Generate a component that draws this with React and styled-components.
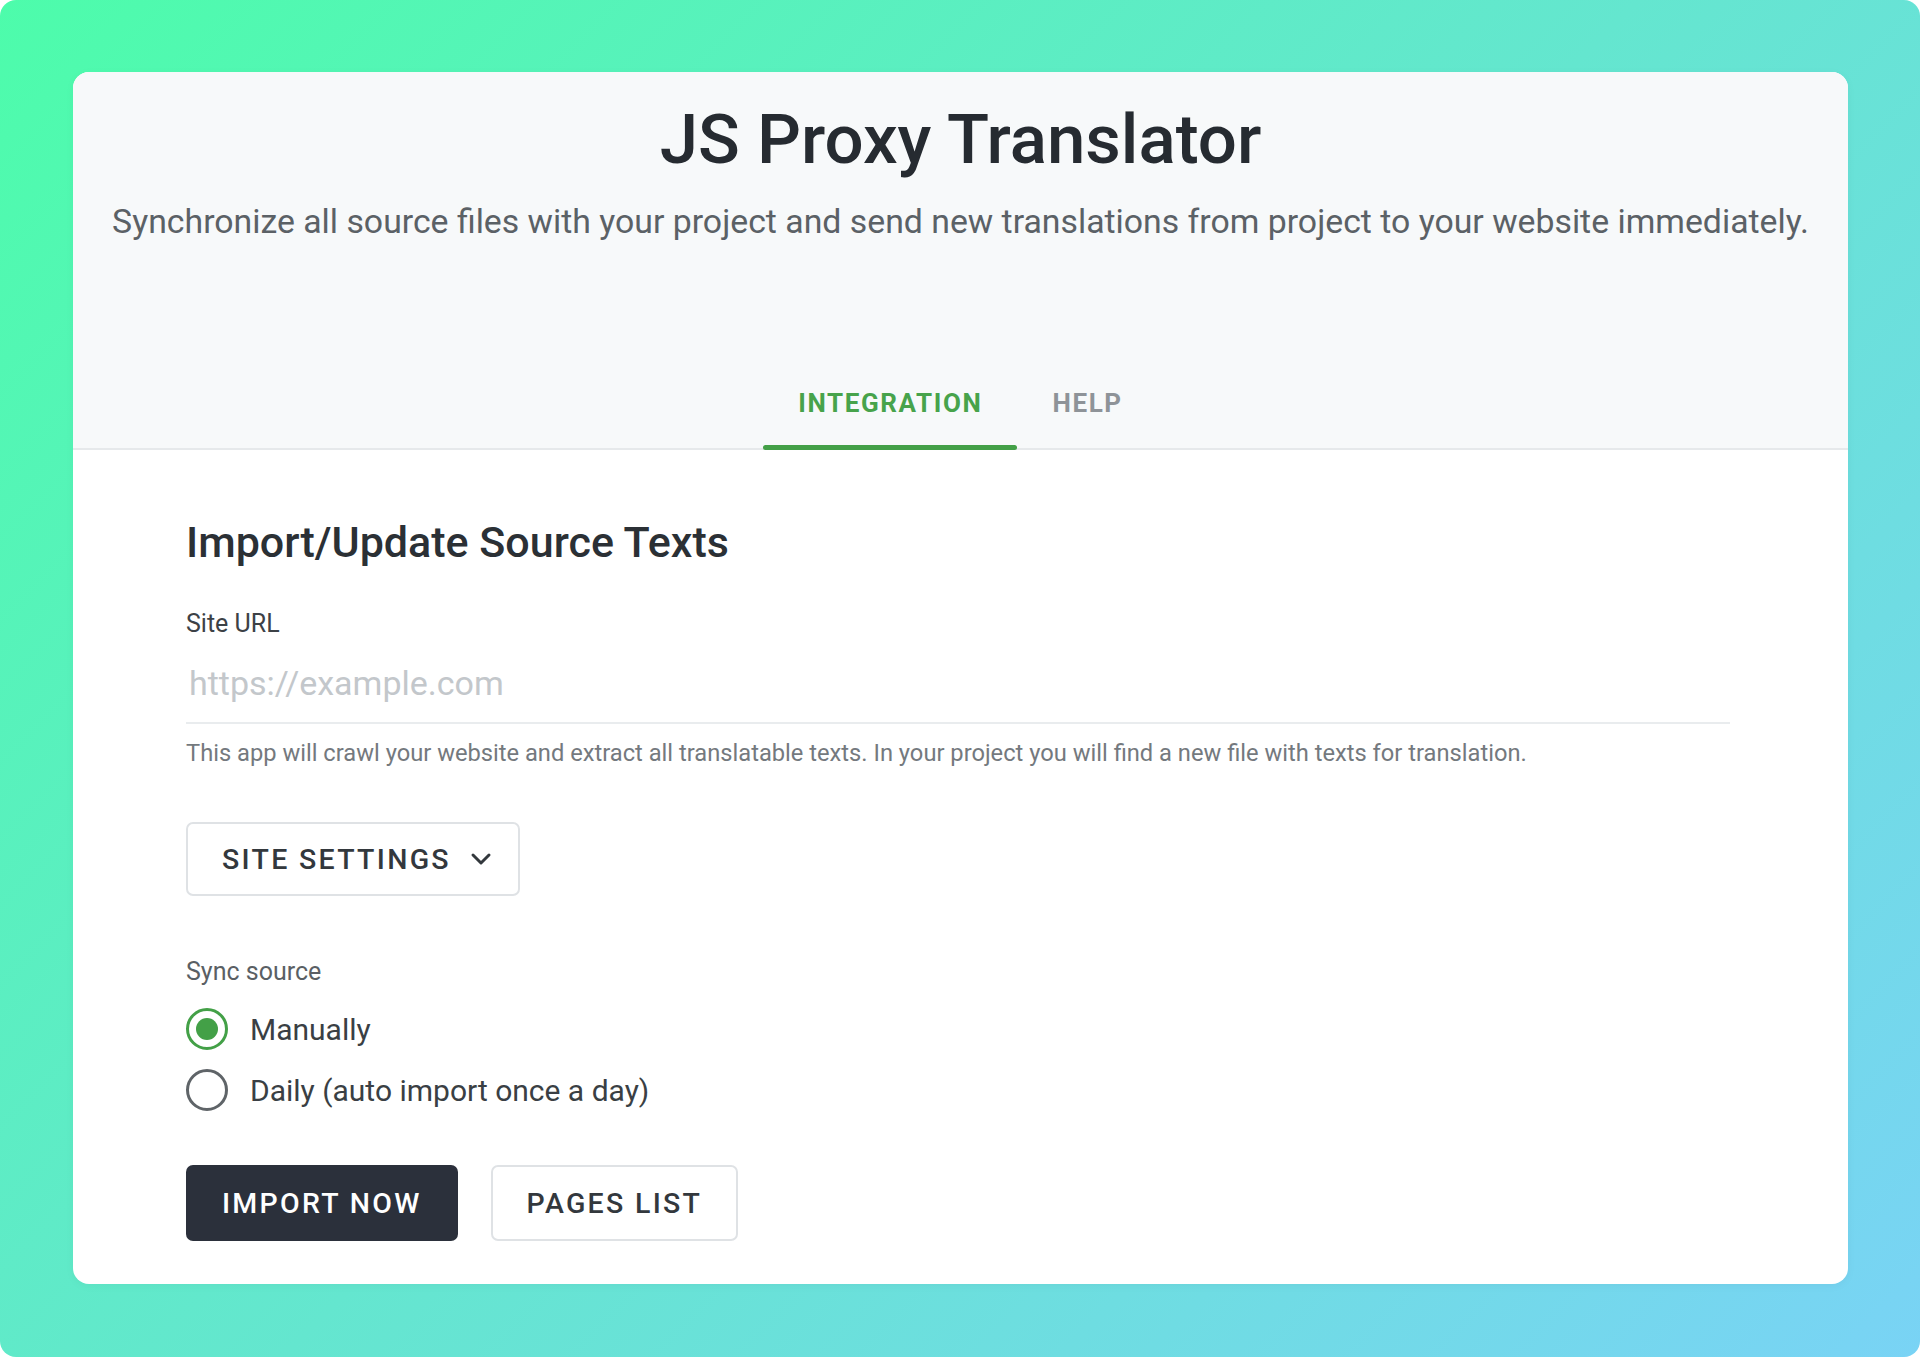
import React, { useState } from "react";
import styled, { createGlobalStyle } from "styled-components";

const GlobalStyle = createGlobalStyle`
  html, body { margin: 0; padding: 0; background: #ffffff; }
  body { font-family: Roboto, "Noto Sans", "Liberation Sans", sans-serif; -webkit-font-smoothing: antialiased; }
  * { box-sizing: border-box; }
`;

const Page = styled.div`
  width: 1920px;
  height: 1357px;
  border-radius: 16px;
  background: linear-gradient(135deg, #4dfcab 0%, #64e6cf 50%, #79d3f5 100%);
  padding: 72px 72px 0 73px;
`;

const Card = styled.div`
  background: #ffffff;
  border-radius: 16px;
  overflow: hidden;
  box-shadow: 0 2px 10px rgba(0, 0, 0, 0.04);
`;

const Header = styled.header`
  background: #f7f9fa;
  border-bottom: 2px solid #e6e9eb;
  display: flex;
  flex-direction: column;
  align-items: center;
  padding-top: 28px;
`;

const Title = styled.h1`
  margin: 0;
  font-size: 69px;
  line-height: 80px;
  font-weight: 500;
  color: #262b31;
`;

const Subtitle = styled.p`
  margin: 22px 0 0;
  font-size: 33.8px;
  line-height: 40px;
  font-weight: 400;
  color: #5b6166;
  white-space: nowrap;
`;

const Tabs = styled.nav`
  display: flex;
  margin-top: 116px;
`;

const Tab = styled.button`
  position: relative;
  height: 90px;
  padding: 0 35px;
  border: none;
  background: transparent;
  font-family: inherit;
  font-size: 26px;
  font-weight: 700;
  letter-spacing: 1.6px;
  color: ${(p) => (p.$active ? "#47a34b" : "#8e9398")};
  cursor: pointer;
  &::after {
    content: "";
    position: absolute;
    left: 0;
    right: 0;
    bottom: -2px;
    height: 5px;
    border-radius: 3px;
    background: ${(p) => (p.$active ? "#43a047" : "transparent")};
  }
`;

const Body = styled.section`
  padding: 67px 118px 43px 113px;
  display: flex;
  flex-direction: column;
  align-items: flex-start;
`;

const SectionTitle = styled.h2`
  margin: 0;
  font-size: 43px;
  line-height: 50px;
  font-weight: 500;
  color: #2b3035;
`;

const FieldLabel = styled.label`
  display: block;
  margin-top: ${(p) => p.$top}px;
  font-size: 25px;
  line-height: 30px;
  color: ${(p) => p.$color || "#3c4146"};
`;

const UrlInput = styled.input`
  display: block;
  width: 100%;
  margin-top: 24px;
  padding: 0 0 19px 3px;
  height: 61px;
  border: none;
  border-bottom: 2px solid #e9ecee;
  outline: none;
  background: transparent;
  font-family: inherit;
  font-size: 34px;
  line-height: 40px;
  color: #2b3035;
  &::placeholder { color: #c3c7cb; }
`;

const Helper = styled.p`
  margin: 15px 0 0;
  font-size: 23.7px;
  line-height: 28px;
  color: #74797e;
`;

const OutlineButton = styled.button`
  display: inline-flex;
  align-items: center;
  justify-content: center;
  gap: 19px;
  height: ${(p) => p.$h || 76}px;
  padding: 0 ${(p) => p.$pr || 34}px 0 34px;
  border: 2px solid #dfe2e5;
  border-radius: 7px;
  background: #ffffff;
  font-family: inherit;
  font-size: 28.5px;
  font-weight: 500;
  letter-spacing: 2.3px;
  color: #33383d;
  cursor: pointer;
`;

const SettingsButton = styled(OutlineButton)`
  margin-top: 55px;
`;

const RadioGroup = styled.div`
  display: flex;
  flex-direction: column;
  gap: 15px;
  margin-top: 19px;
`;

const RadioRow = styled.label`
  display: flex;
  align-items: center;
  gap: 22px;
  height: 46px;
  font-size: 30px;
  color: #3a3f44;
  cursor: pointer;
`;

const RadioCircle = styled.span`
  width: 42px;
  height: 42px;
  border-radius: 50%;
  border: 3px solid ${(p) => (p.$checked ? "#43a047" : "#5f6468")};
  display: flex;
  align-items: center;
  justify-content: center;
  &::after {
    content: "";
    width: 22px;
    height: 22px;
    border-radius: 50%;
    background: ${(p) => (p.$checked ? "#43a047" : "transparent")};
  }
`;

const Actions = styled.div`
  display: flex;
  gap: 33px;
  margin-top: 52px;
`;

const PrimaryButton = styled.button`
  height: 76px;
  padding: 0 36px;
  border: none;
  border-radius: 7px;
  background: #2b303b;
  font-family: inherit;
  font-size: 28.5px;
  font-weight: 500;
  letter-spacing: 2.3px;
  color: #ffffff;
  cursor: pointer;
`;

const Chevron = () => (
  <svg width="22" height="14" viewBox="0 0 22 14" fill="none" stroke="#33383d" strokeWidth="3" strokeLinecap="round" strokeLinejoin="round">
    <path d="M3 3l8 8 8-8" />
  </svg>
);

export default function App() {
  const [tab, setTab] = useState("integration");
  const [sync, setSync] = useState("manual");
  return (
    <>
      <GlobalStyle />
      <Page>
        <Card>
          <Header>
            <Title>JS Proxy Translator</Title>
            <Subtitle>
              Synchronize all source files with your project and send new translations from project to your website immediately.
            </Subtitle>
            <Tabs>
              <Tab $active={tab === "integration"} onClick={() => setTab("integration")}>INTEGRATION</Tab>
              <Tab $active={tab === "help"} onClick={() => setTab("help")}>HELP</Tab>
            </Tabs>
          </Header>
          <Body>
            <SectionTitle>Import/Update Source Texts</SectionTitle>
            <FieldLabel $top={42} htmlFor="site-url">Site URL</FieldLabel>
            <UrlInput id="site-url" placeholder="https://example.com" />
            <Helper>
              This app will crawl your website and extract all translatable texts. In your project you will find a new file with texts for translation.
            </Helper>
            <SettingsButton $h={74} $pr={26}>
              SITE SETTINGS <Chevron />
            </SettingsButton>
            <FieldLabel $top={61} $color="#5a5f64">Sync source</FieldLabel>
            <RadioGroup>
              <RadioRow onClick={() => setSync("manual")}>
                <RadioCircle $checked={sync === "manual"} />
                Manually
              </RadioRow>
              <RadioRow onClick={() => setSync("daily")}>
                <RadioCircle $checked={sync === "daily"} />
                Daily (auto import once a day)
              </RadioRow>
            </RadioGroup>
            <Actions>
              <PrimaryButton>IMPORT NOW</PrimaryButton>
              <OutlineButton>PAGES LIST</OutlineButton>
            </Actions>
          </Body>
        </Card>
      </Page>
    </>
  );
}
